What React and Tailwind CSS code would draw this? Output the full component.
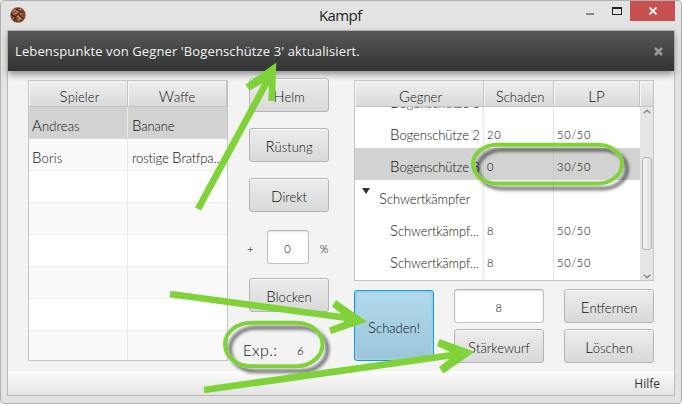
import React from 'react';

// Label whose initial capital is drawn slightly larger than the rest.
function Label({ text, className = '' }) {
  return (
    <span className={`block whitespace-nowrap font-['Lato',sans-serif] text-[13px] leading-[16px] font-light text-[#111] ${className}`}>
      {text.split(/(?=[A-ZÄÖÜ])/).map((part, i) =>
        /^[A-ZÄÖÜ]/.test(part) ? (
          <React.Fragment key={i}>
            <span className="text-[15px] leading-[16px]">{part[0]}</span>
            {part.slice(1)}
          </React.Fragment>
        ) : (
          <React.Fragment key={i}>{part}</React.Fragment>
        )
      )}
    </span>
  );
}

function Num({ children, className = '' }) {
  return (
    <span className={`block whitespace-nowrap font-['Lato',sans-serif] text-[11px] leading-[16px] font-light tracking-[0.75px] text-black ${className}`}>
      {children}
    </span>
  );
}

function Button({ text, className = '', labelClass = '' }) {
  return (
    <button className={`flex h-[34px] shrink-0 items-center justify-center rounded-[3px] border border-[#b5b5b5] bg-linear-to-b from-[#ececec] to-[#d9d9d9] pt-[3px] shadow-[inset_0_1px_0_#f8f8f8] ${className}`}>
      <Label text={text} className={labelClass} />
    </button>
  );
}

function Field({ value, className = '' }) {
  return (
    <div className={`flex h-[34px] items-center justify-center rounded-[3px] border border-[#c3c3c3] border-t-[#b5b5b5] bg-white pt-[4px] shadow-[inset_0_1px_2px_#ddd] ${className}`}>
      <Num>{value}</Num>
    </div>
  );
}

function Head({ text, className = '', labelClass = '' }) {
  return (
    <div className={`flex h-[26px] shrink-0 items-center justify-center border-r border-b border-[#c4c4c4] bg-linear-to-b from-[#efefef] to-[#dadada] pt-[5px] shadow-[inset_1px_1px_0_#f7f7f7] ${className}`}>
      {text && <Label text={text} className={labelClass} />}
    </div>
  );
}

const players = [
  ['Andreas', 'Banane', 'bg-[#d2d2d2] border-[#d9d9d9]'],
  ['Boris', 'rostige Bratfpa...', 'bg-[#f9f9f9] border-[#ededed]'],
  ['', '', 'bg-white border-[#ededed]'],
  ['', '', 'bg-[#f9f9f9] border-[#ededed]'],
  ['', '', 'bg-white border-[#ededed]'],
  ['', '', 'bg-[#f9f9f9] border-[#ededed]'],
  ['', '', 'bg-white border-[#ededed]'],
  ['', '', 'bg-[#f9f9f9] border-[#ededed]'],
];

const enemies = [
  ['Bogenschütze 1', '', '50/50', 'pl-[35px]'],
  ['Bogenschütze 2', '20', '50/50', 'pl-[35px]'],
  ['Bogenschütze 3', '0', '30/50', 'pl-[35px]'],
  ['Schwertkämpfer', '', '', 'pl-[7px]'],
  ['Schwertkämpf...', '8', '50/50', 'pl-[35px]'],
  ['Schwertkämpf...', '8', '50/50', 'pl-[35px]'],
  ['', '', '', ''],
];

function PlayerTable() {
  return (
    <div className="ml-[20px] mt-[9px] h-[281px] w-[200px] shrink-0 overflow-hidden border border-[#c4c4c4] bg-white">
      <div className="flex">
        <Head text="Spieler" className="w-[99px] pl-[3px]" labelClass="tracking-[0.1px]" />
        <Head text="Waffe" className="w-[99px]" />
      </div>
      {players.map(([name, weapon, row], i) => (
        <div key={i} className={`flex h-[32px] border-b ${row}`}>
          <div className="w-[99px] shrink-0 border-r border-[#ebebeb] pl-[3px] pt-[10px]">
            {name && <Label text={name} className="tracking-[0.1px]" />}
          </div>
          <div className="pl-[4px] pt-[10px]">{weapon && <Label text={weapon} className="tracking-[-0.15px]" />}</div>
        </div>
      ))}
    </div>
  );
}

function EnemyTable() {
  return (
    <div className="flex h-[201px] w-[300px] flex-col border border-[#c4c4c4] bg-white">
      <div className="flex">
        <Head text="Gegner" className="w-[129px] pl-[3px]" />
        <Head text="Schaden" className="w-[70px] pl-[3px]" />
        <Head text="LP" className="w-[86px]" />
        <Head className="w-[13px] border-r-0" />
      </div>
      <div className="flex min-h-0 flex-1">
        <div className="flex-1 overflow-hidden">
          <div className="-mt-[23px]">
            {enemies.map(([name, dmg, lp, indent], i) => (
              <div key={i} className={`flex h-[32px] ${i === 2 ? 'bg-[#d2d2d2]' : 'bg-white'}`}>
                <div className={`flex w-[129px] shrink-0 border-r pt-[10px] ${i === 2 ? 'border-[#c8c8c8]' : 'border-[#e6e6e6]'} ${indent}`}>
                  {i === 3 && (
                    <svg className="-mt-[2px] mr-[9px] h-[6px] w-[8px] shrink-0" viewBox="0 0 8 6">
                      <path d="M0 0H8L4 6Z" fill="#333" />
                    </svg>
                  )}
                  {name && <Label text={name} className="tracking-[-0.1px]" />}
                </div>
                <div className={`w-[70px] shrink-0 border-r pl-[3px] pt-[11px] ${i === 2 ? 'border-[#c8c8c8]' : 'border-[#e6e6e6]'}`}>
                  {dmg && <Num>{dmg}</Num>}
                </div>
                <div className="pl-[3px] pt-[11px]">{lp && <Num>{lp}</Num>}</div>
              </div>
            ))}
          </div>
        </div>
        <div className="flex w-[13px] flex-col items-center bg-[#e5e5e5]">
          <svg className="mt-[2px] h-[5px] w-[8px] shrink-0" viewBox="0 0 8 5"><path d="M.7 4.3 4 1.2 7.3 4.3" fill="none" stroke="#888" strokeWidth="1.3" /></svg>
          <div className="mt-[43px] h-[93px] w-[10px] shrink-0 rounded-[3px] border border-[#b3b3b3] bg-linear-to-r from-[#f5f5f5] to-[#dedede]" />
          <svg className="mt-[24px] h-[5px] w-[8px] shrink-0" viewBox="0 0 8 5"><path d="M.7.7 4 3.8 7.3.7" fill="none" stroke="#888" strokeWidth="1.3" /></svg>
        </div>
      </div>
    </div>
  );
}

function Annotations() {
  return (
    <svg className="pointer-events-none absolute inset-0" width="682" height="404" viewBox="0 0 682 404">
      <defs>
        <filter id="soft" x="-20%" y="-40%" width="140%" height="190%">
          <feDropShadow dx="5" dy="5" stdDeviation="1.8" floodColor="#000" floodOpacity="0.5" />
        </filter>
      </defs>
      <g fill="none" stroke="#7fd338">
        <g strokeWidth="4" filter="url(#soft)">
          <rect x="473" y="144.7" width="149" height="38.8" rx="24" ry="19.4" />
          <rect x="225" y="322.7" width="97.5" height="43.5" rx="26" ry="21.7" />
        </g>
        <g strokeWidth="6.8">
          <path d="M198 209 270 76" />
          <path d="M170 294 355 319" />
          <path d="M204 390 460 354" />
        </g>
      </g>
      <g fill="#7fd338">
        <path d="M276.300 62.500 245.500 84.500 249.500 90.500 264 82.500 269 86 268.300 101 275 101Z" />
        <path d="M367 321.700 336 300 332 306.500 344 316 344 322 329 327.500 331 334Z" />
        <path d="M474.500 351.700 439.500 339 437 346 450 352 450 358.500 439 367 443.500 373.500Z" />
      </g>
    </svg>
  );
}

export default function App() {
  return (
    <div className="relative h-[404px] w-[682px] overflow-hidden bg-white font-['Open_Sans',sans-serif]">
      <div className="flex h-[404px] w-[682px] flex-col rounded-[4px] border border-[#b0b0b0] bg-[#e3e3e3] px-[6px]">
        <header className="flex h-[29px] shrink-0 items-start">
          <svg className="ml-[3px] mt-[6px] h-[16px] w-[16px] shrink-0" viewBox="0 0 16 16">
            <circle cx="8" cy="8" r="7.700" fill="#80452e" />
            <path d="M2 5 5 3 8 5 11 2M2 8l4-2 3 3 4-4M3 12l4-4 3 4 3-3M6 14l3-2" fill="none" stroke="#c88766" strokeWidth="1.300" />
            <path d="M1 7l4 3 3-3 5 4M6 2l3 2 4 2M4 11l3 3" fill="none" stroke="#3c2118" strokeWidth="1.300" />
          </svg>
          <div className="ml-[293px] w-[60px] pt-[3px] text-[15px] leading-[22px] tracking-[-0.6px] text-[#222]">Kampf</div>
          <div className="ml-auto flex items-start">
            <div className="mr-[18px] mt-[12px] h-[2px] w-[8px] bg-[#888]" />
            <div className="mr-[8px] mt-[6px] h-[8px] w-[10px] border border-t-2 border-[#222]" />
            <div className="flex h-[20px] w-[45px] items-center justify-center bg-[#c75050]">
              <svg width="8" height="8" viewBox="0 0 8 8"><path d="M.5.5l7 7m0-7-7 7" stroke="#fff" strokeWidth="1.700" /></svg>
            </div>
          </div>
        </header>
        <main className="flex h-[366px] flex-col border border-[#bbb] bg-[#f3f3f3]">
          <div className="flex h-[40px] shrink-0 items-center bg-linear-to-b from-[#575757] to-[#333] pl-[7px] pr-[11px] text-[13px] text-[#f2f2f2] shadow-[0_3px_7px_#888]">
            <span className="whitespace-nowrap pt-[2px] tracking-[0.12px]">Lebenspunkte von Gegner 'Bogenschütze 3' aktualisiert.</span>
            <svg className="ml-auto" width="9" height="9" viewBox="0 0 9 9"><path d="M1 1l7 7m0-7-7 7" stroke="#999" strokeWidth="2.600" /></svg>
          </div>
          <div className="flex h-[300px] shrink-0">
            <PlayerTable />
            <div className="ml-[21px] mt-[7px] flex w-[80px] shrink-0 flex-col gap-[16px]">
              <Button text="Helm" />
              <Button text="Rüstung" />
              <Button text="Direkt" />
              <div className="mt-[2px] flex items-center">
                <Num className="-ml-[2px] w-[20px] pt-[4px]">+</Num>
                <Field value="0" className="w-[42px]" />
                <Num className="pl-[11px] pt-[4px] text-[10px]">%</Num>
              </div>
              <Button text="Blocken" className="-mt-[2px]" />
              <div className="-ml-[6px] mt-[12px] flex items-center">
                <Label text="Exp.:" className="w-[54px] text-[16px] tracking-[0.4px]" />
                <Num className="pt-[3px] text-[12px] italic">6</Num>
              </div>
            </div>
            <div className="ml-[25px] mt-[9px] w-[300px]">
              <EnemyTable />
              <div className="mt-[8px] flex">
                <button className="mt-[1px] flex h-[71px] w-[80px] items-center justify-center rounded-[3px] border-[1.5px] border-[#0c9bd2] bg-linear-to-b from-[#b2daec] to-[#9cc5d9] pt-[4px] shadow-[inset_0_0_0_2px_#a1cee3]">
                  <Label text="Schaden!" />
                </button>
                <div className="ml-[20px] grid grid-cols-[90px_90px] gap-x-[20px] gap-y-[6px]">
                  <Field value="8" />
                  <Button text="Entfernen" />
                  <Button text="Stärkewurf" />
                  <Button text="Löschen" />
                </div>
              </div>
            </div>
          </div>
          <footer className="flex h-[24px] shrink-0 items-center justify-end bg-linear-to-b from-[#fdfdfd] to-[#e3e3e3] pr-[14px] pt-[2px] text-[12px] text-[#333]">Hilfe</footer>
        </main>
      </div>
      <Annotations />
    </div>
  );
}
